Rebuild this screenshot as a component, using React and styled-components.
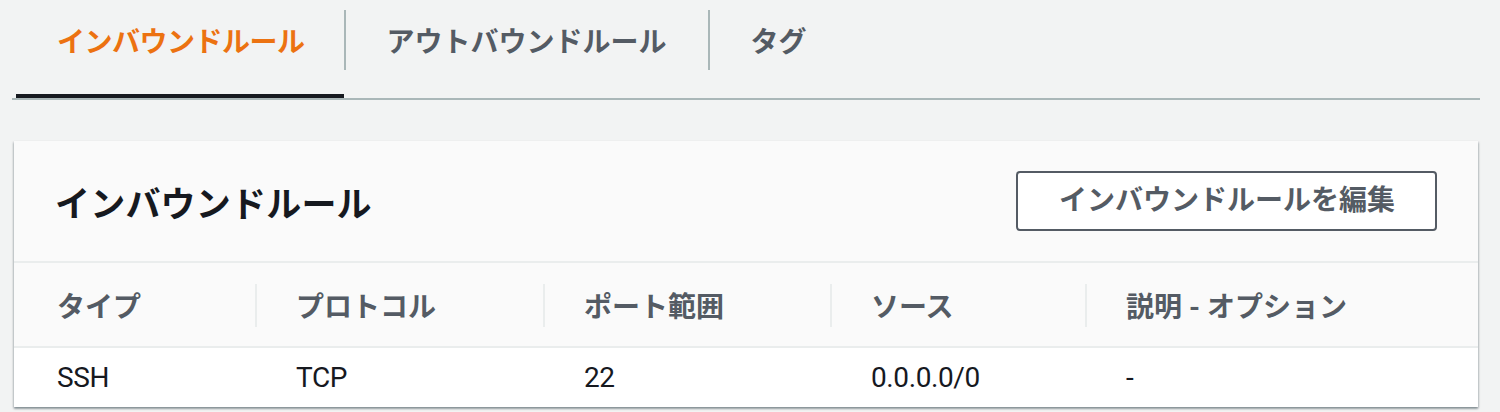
import React from 'react'
import styled, { createGlobalStyle } from 'styled-components'

const COLORS = {
  PAGE: '#f2f3f3',
  INK: '#16191f',
  GRAY: '#545b64',
  LINE: '#aab7b8',
  LINE_LIGHT: '#eaeded',
  ORANGE: '#ec7211',
  HEAD_BG: '#fafafa',
  WHITE: '#ffffff',
}

const FONT = `Roboto, "Noto Sans CJK JP", "Noto Sans", sans-serif`

const GlobalStyle = createGlobalStyle`
  html, body {
    margin: 0;
    padding: 0;
    background: ${COLORS.PAGE};
    font-family: ${FONT};
    overflow: hidden;
  }
`

const Page = styled.div`
  width: 1468px;
  height: 412px;
  padding-left: 12px;
`

const TabBar = styled.div`
  display: flex;
  align-items: flex-start;
  padding-left: 4px;
  border-bottom: 2px solid ${COLORS.LINE};
`

const Tab = styled.div`
  padding-top: 10px;
  padding-bottom: 24px;
  border-bottom: 4px solid ${props => (props.active ? COLORS.INK : 'transparent')};
  cursor: pointer;
`

const TabSeparator = styled.div`
  width: 2px;
  height: 60px;
  margin-top: 10px;
  background: ${COLORS.LINE};
`

const TabLabel = styled.div`
  display: flex;
  align-items: center;
  height: 60px;
  padding: 0 ${props => props.padRight} 0 41px;
  font-size: 28px;
  font-weight: bold;
  letter-spacing: ${props => props.spacing};
  color: ${props => (props.active ? COLORS.ORANGE : COLORS.GRAY)};
`

const Panel = styled.div`
  margin: 41px 2px 0 2px;
  background: ${COLORS.WHITE};
  box-shadow: 0 2px 2px 0 rgba(0, 28, 36, 0.3), 1px 1px 2px 0 rgba(0, 28, 36, 0.15),
    -1px 1px 2px 0 rgba(0, 28, 36, 0.15);
`

const PanelHeader = styled.div`
  display: flex;
  align-items: center;
  justify-content: space-between;
  height: 120px;
  padding: 0 41px;
  background: ${COLORS.HEAD_BG};
  border-bottom: 2px solid ${COLORS.LINE_LIGHT};
`

const Title = styled.h2`
  margin: 0;
  font-size: 35px;
  font-weight: bold;
  letter-spacing: 0.2px;
  color: ${COLORS.INK};
`

const EditButton = styled.button`
  height: 60px;
  padding: 0 40px 0 41px;
  border: 2px solid ${COLORS.GRAY};
  border-radius: 4px;
  background: ${COLORS.WHITE};
  font: bold 28px/1 ${FONT};
  color: ${COLORS.GRAY};
  cursor: pointer;
`

const Row = styled.div`
  display: grid;
  grid-template-columns: 241px 288px 287px 255px 1fr;
  align-items: center;
  height: ${props => (props.head ? '83px' : '59px')};
  background: ${props => (props.head ? COLORS.HEAD_BG : COLORS.WHITE)};
  border-bottom: ${props => (props.head ? `2px solid ${COLORS.LINE_LIGHT}` : 'none')};
`

const HeadCell = styled.div`
  position: relative;
  padding-left: ${props => (props.first ? '43px' : '41px')};
  font-size: 28px;
  font-weight: bold;
  color: ${COLORS.GRAY};
  white-space: nowrap;

  &::before {
    content: '';
    display: ${props => (props.first ? 'none' : 'block')};
    position: absolute;
    left: 0;
    top: 50%;
    width: 2px;
    height: 43px;
    margin-top: -21px;
    background: ${COLORS.LINE_LIGHT};
  }
`

const Cell = styled.div`
  padding-left: ${props => (props.first ? '43px' : '41px')};
  font-size: 28px;
  letter-spacing: -0.4px;
  color: ${COLORS.INK};
  white-space: nowrap;
`

const tabs = [
  { label: 'インバウンドルール', spacing: '-0.5px', padRight: '39px' },
  { label: 'アウトバウンドルール', spacing: '0px', padRight: '41px' },
  { label: 'タグ', spacing: '0px', padRight: '41px' },
]
const columns = ['タイプ', 'プロトコル', 'ポート範囲', 'ソース', '説明 - オプション']
const rules = [['SSH', 'TCP', '22', '0.0.0.0/0', '-']]

const App = () => (
  <>
    <GlobalStyle />
    <Page>
      <TabBar>
        {tabs.map((tab, i) => (
          <React.Fragment key={tab.label}>
            {i > 0 && <TabSeparator />}
            <Tab active={i === 0}>
              <TabLabel active={i === 0} spacing={tab.spacing} padRight={tab.padRight}>
                {tab.label}
              </TabLabel>
            </Tab>
          </React.Fragment>
        ))}
      </TabBar>
      <Panel>
        <PanelHeader>
          <Title>インバウンドルール</Title>
          <EditButton>インバウンドルールを編集</EditButton>
        </PanelHeader>
        <Row head>
          {columns.map((c, i) => (
            <HeadCell key={c} first={i === 0}>
              {c}
            </HeadCell>
          ))}
        </Row>
        {rules.map(rule => (
          <Row key={rule.join()}>
            {rule.map((v, i) => (
              <Cell key={i} first={i === 0}>
                {v}
              </Cell>
            ))}
          </Row>
        ))}
      </Panel>
    </Page>
  </>
)

export default App
